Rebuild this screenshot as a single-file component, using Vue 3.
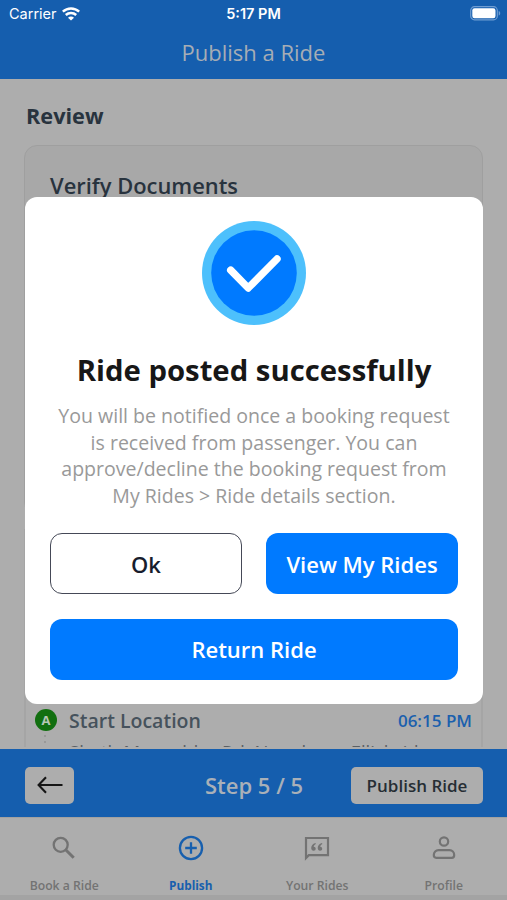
<script setup>
const message = [
  'You will be notified once a booking request',
  'is received from passenger. You can',
  'approve/decline the booking request from',
  'My Rides > Ride details section.',
]
</script>

<template>
  <div class="screen">
    <header class="header">
      <div class="status">
        <div class="carrier">
          <span>Carrier</span>
          <svg width="18" height="14" viewBox="0 0 18 14" fill="none" stroke="#fff" stroke-width="2.5">
            <path d="M.8 4.700C5.500.4 12.500.4 17.200 4.700" />
            <path d="M3.800 8c2.900-2.700 7.500-2.700 10.400 0" />
            <path d="M9 13.600 6 10.700c1.700-1.600 4.300-1.600 6 0z" fill="#fff" stroke="none" />
          </svg>
        </div>
        <span class="clock">5:17 PM</span>
        <svg class="battery" width="31" height="15" viewBox="0 0 31 15">
          <rect x=".7" y=".7" width="26.600" height="13.100" rx="3.800" fill="none" stroke="#6f9dd2" stroke-width="1.200" />
          <rect x="2.300" y="2.300" width="23.200" height="9.900" rx="2.200" fill="#fff" />
          <path d="M28.700 5c2 .6 2 4 0 4.600z" fill="#6f9dd2" />
        </svg>
      </div>
      <h1 class="page-title">Publish a Ride</h1>
    </header>

    <main class="content">
      <h2 class="review">Review</h2>
      <section class="documents">Verify Documents</section>
      <section class="trip">
        <div class="trip-row">
          <span class="marker">A</span>
          <span class="place">Start Location</span>
          <span class="time">06:15 PM</span>
        </div>
        <div class="trip-detail">
          <span class="dots"><i></i><i></i></span>
          <p class="address">Sheth Mangaldas Rd, Near here, Ellisbridge,</p>
        </div>
      </section>
    </main>

    <div class="step-bar">
      <button class="back" aria-label="Back">
        <svg width="26" height="18" viewBox="0 0 26 18" fill="none" stroke="#151515" stroke-width="2.100">
          <path d="M25.500 9H1.800M9 1.300 1.600 9 9 16.700" />
        </svg>
      </button>
      <span class="step">Step 5 / 5</span>
      <button class="publish">Publish Ride</button>
    </div>

    <nav class="tabs">
      <a class="tab">
        <svg width="26" height="26" viewBox="0 0 26 26" fill="none" stroke="currentColor" stroke-width="2.300">
          <circle cx="9.700" cy="9.800" r="7" />
          <path d="m14.700 14.800 8 8" stroke-width="3" />
        </svg>
        <span>Book a Ride</span>
      </a>
      <a class="tab active">
        <svg width="26" height="26" viewBox="0 0 26 26" fill="none" stroke="currentColor" stroke-width="2.300">
          <circle cx="13" cy="13" r="11.100" />
          <path d="M13 7.200v11.600M7.200 13h11.600" />
        </svg>
        <span>Publish</span>
      </a>
      <a class="tab">
        <svg width="26" height="26" viewBox="0 0 26 26" fill="none" stroke="currentColor" stroke-width="2.200">
          <path d="M2 23V3h22v17.200H4.800z" />
          <g fill="currentColor" stroke="none">
            <path d="M11.400 8c-2.800.9-4.200 2.800-4.200 5.100 0 1.600 1 2.700 2.400 2.700 1.300 0 2.100-.9 2.100-2 0-1.200-.8-2-2-2 .2-1.200.9-2.100 2.200-2.700z" />
            <path d="M17.900 8c-2.800.9-4.200 2.800-4.200 5.100 0 1.600 1 2.700 2.400 2.700 1.300 0 2.100-.9 2.100-2 0-1.200-.8-2-2-2 .2-1.200.9-2.100 2.200-2.700z" />
          </g>
        </svg>
        <span>Your Rides</span>
      </a>
      <a class="tab">
        <svg width="26" height="26" viewBox="0 0 26 26" fill="none" stroke="currentColor" stroke-width="2.200">
          <circle cx="13" cy="6.500" r="4.200" />
          <path d="M7.500 15.200h11c2.600 0 4.700 1.800 4.700 4.700 0 1.900-.8 2.900-2.400 2.900H5.200c-1.600 0-2.400-1-2.400-2.900 0-2.900 2.100-4.700 4.700-4.700z" />
        </svg>
        <span>Profile</span>
      </a>
    </nav>

    <div class="modal" role="dialog">
      <svg class="check" width="104" height="104" viewBox="0 0 104 104">
        <circle cx="52" cy="52" r="52" fill="#4dc0fc" />
        <circle cx="52" cy="52" r="42.800" fill="#007aff" />
        <path d="M28.700 49.200 46.200 67 75 38" fill="none" stroke="#fff" stroke-width="7.400" stroke-linecap="round" stroke-linejoin="round" />
      </svg>
      <h2 class="modal-title">Ride posted successfully</h2>
      <p class="message"><span v-for="line in message" :key="line">{{ line }}</span></p>
      <div class="actions">
        <button class="btn outline">Ok</button>
        <button class="btn">View My Rides</button>
        <button class="btn wide">Return Ride</button>
      </div>
    </div>
  </div>
</template>

<style>
body { margin: 0; }
</style>

<style scoped>
* { box-sizing: border-box; }
h1, h2, p { margin: 0; }
button { border: 0; padding: 0; font: inherit; }
svg { display: block; flex: none; }
.screen {
  position: relative;
  display: flex;
  flex-direction: column;
  width: 507px;
  height: 900px;
  overflow: hidden;
  background: #adadad;
  font-family: "Open Sans", sans-serif;
  white-space: nowrap;
}
.header { height: 79px; background: #155eae; }
.status {
  display: grid;
  grid-template-columns: 1fr auto 1fr;
  align-items: center;
  height: 27px;
  padding: 0 6px 0 9px;
  color: #fff;
  font: 14.500px/20px Inter, sans-serif;
}
.carrier { display: flex; align-items: center; gap: 5px; }
.clock { margin-left: -3px; font-weight: 600; }
.battery { justify-self: end; }
.page-title {
  margin-top: 9px;
  text-align: center;
  color: #a6adb5;
  font-size: 22px;
  line-height: 32px;
  font-weight: 400;
}
.content { display: flex; flex-direction: column; height: 668px; margin-bottom: 2px; padding: 21px 24px 0; overflow: hidden; }
.review { padding-left: 2px; color: #28333e; font-size: 21.700px; line-height: 32px; font-weight: 700; }
.documents {
  flex: none;
  height: 370px;
  margin-top: 13px;
  padding: 24px 25px;
  border: 1.500px solid #9f9f9f;
  border-radius: 13px;
  background: #a8a8a8;
  color: #28333e;
  font-size: 21.900px;
  line-height: 32px;
  font-weight: 600;
}
.trip {
  flex: none;
  margin-top: 14px;
  padding: 176px 9px 0;
  border: solid #a5a5a5;
  border-width: 0 2px;
}
.trip-row { display: flex; align-items: center; height: 30px; }
.marker {
  display: flex;
  align-items: center;
  justify-content: center;
  width: 22px;
  height: 22px;
  border-radius: 50%;
  background: #126f10;
  color: #b5c6b5;
  font-size: 13px;
  font-weight: 700;
}
.place { flex: 1; margin-left: 12px; color: #46525c; font-size: 19.500px; font-weight: 600; }
.time { color: #1b60ad; font-size: 17px; font-weight: 600; }
.trip-detail { display: flex; }
.dots { display: flex; flex-direction: column; gap: 4px; width: 20px; align-items: center; }
.dots i { width: 2px; height: 2px; background: #999; }
.address { margin-left: 14px; padding-top: 3px; color: #5b6064; font-size: 18.500px; line-height: 27px; }
.step-bar {
  display: grid;
  grid-template-columns: 1fr auto 1fr;
  align-items: center;
  height: 68px;
  padding: 4px 24px 0 25px;
  background: #155eae;
}
.back {
  display: flex;
  align-items: center;
  justify-content: center;
  width: 49px;
  height: 37px;
  border-radius: 5px;
  background: #adadad;
}
.step { color: #a9b0b8; font-size: 22px; font-weight: 600; }
.publish {
  justify-self: end;
  width: 132px;
  height: 37px;
  border-radius: 5px;
  background: #adadad;
  color: #262d34;
  font-size: 17px;
  font-weight: 600;
}
.tabs { display: grid; grid-template-columns: repeat(4, 1fr); height: 83px; padding-left: 1px; border-top: 1px solid #a1a1a1; border-bottom: 5px solid #a3a3a3; }
.tab {
  display: flex;
  flex-direction: column;
  align-items: center;
  padding-top: 17px;
  gap: 16px;
  color: #737373;
  font-size: 12.200px;
  line-height: 18px;
  font-weight: 600;
}
.active { gap: 15px; color: #175fae; font-size: 11.800px; font-weight: 700; }
.modal {
  position: absolute;
  top: 197px;
  left: 25px;
  width: 458px;
  height: 507px;
  padding: 24px 25px;
  border-radius: 12px;
  background: #fff;
  display: flex;
  flex-direction: column;
  align-items: center;
}
.modal-title { margin-top: 25px; color: #171717; font-size: 29.300px; line-height: 40px; font-weight: 700; }
.message { display: grid; margin-top: 13px; color: #999; font-size: 19.550px; line-height: 26.500px; text-align: center; }
.actions { display: grid; grid-template-columns: 192px 192px; gap: 24.500px 24px; margin-top: 24px; }
.btn {
  height: 61px;
  border-radius: 12px;
  background: #007aff;
  color: #fff;
  font-size: 22px;
  font-weight: 600;
}
.outline { border: 1.500px solid #454957; background: #fff; color: #171d2d; }
.wide { grid-column: span 2; }
</style>
